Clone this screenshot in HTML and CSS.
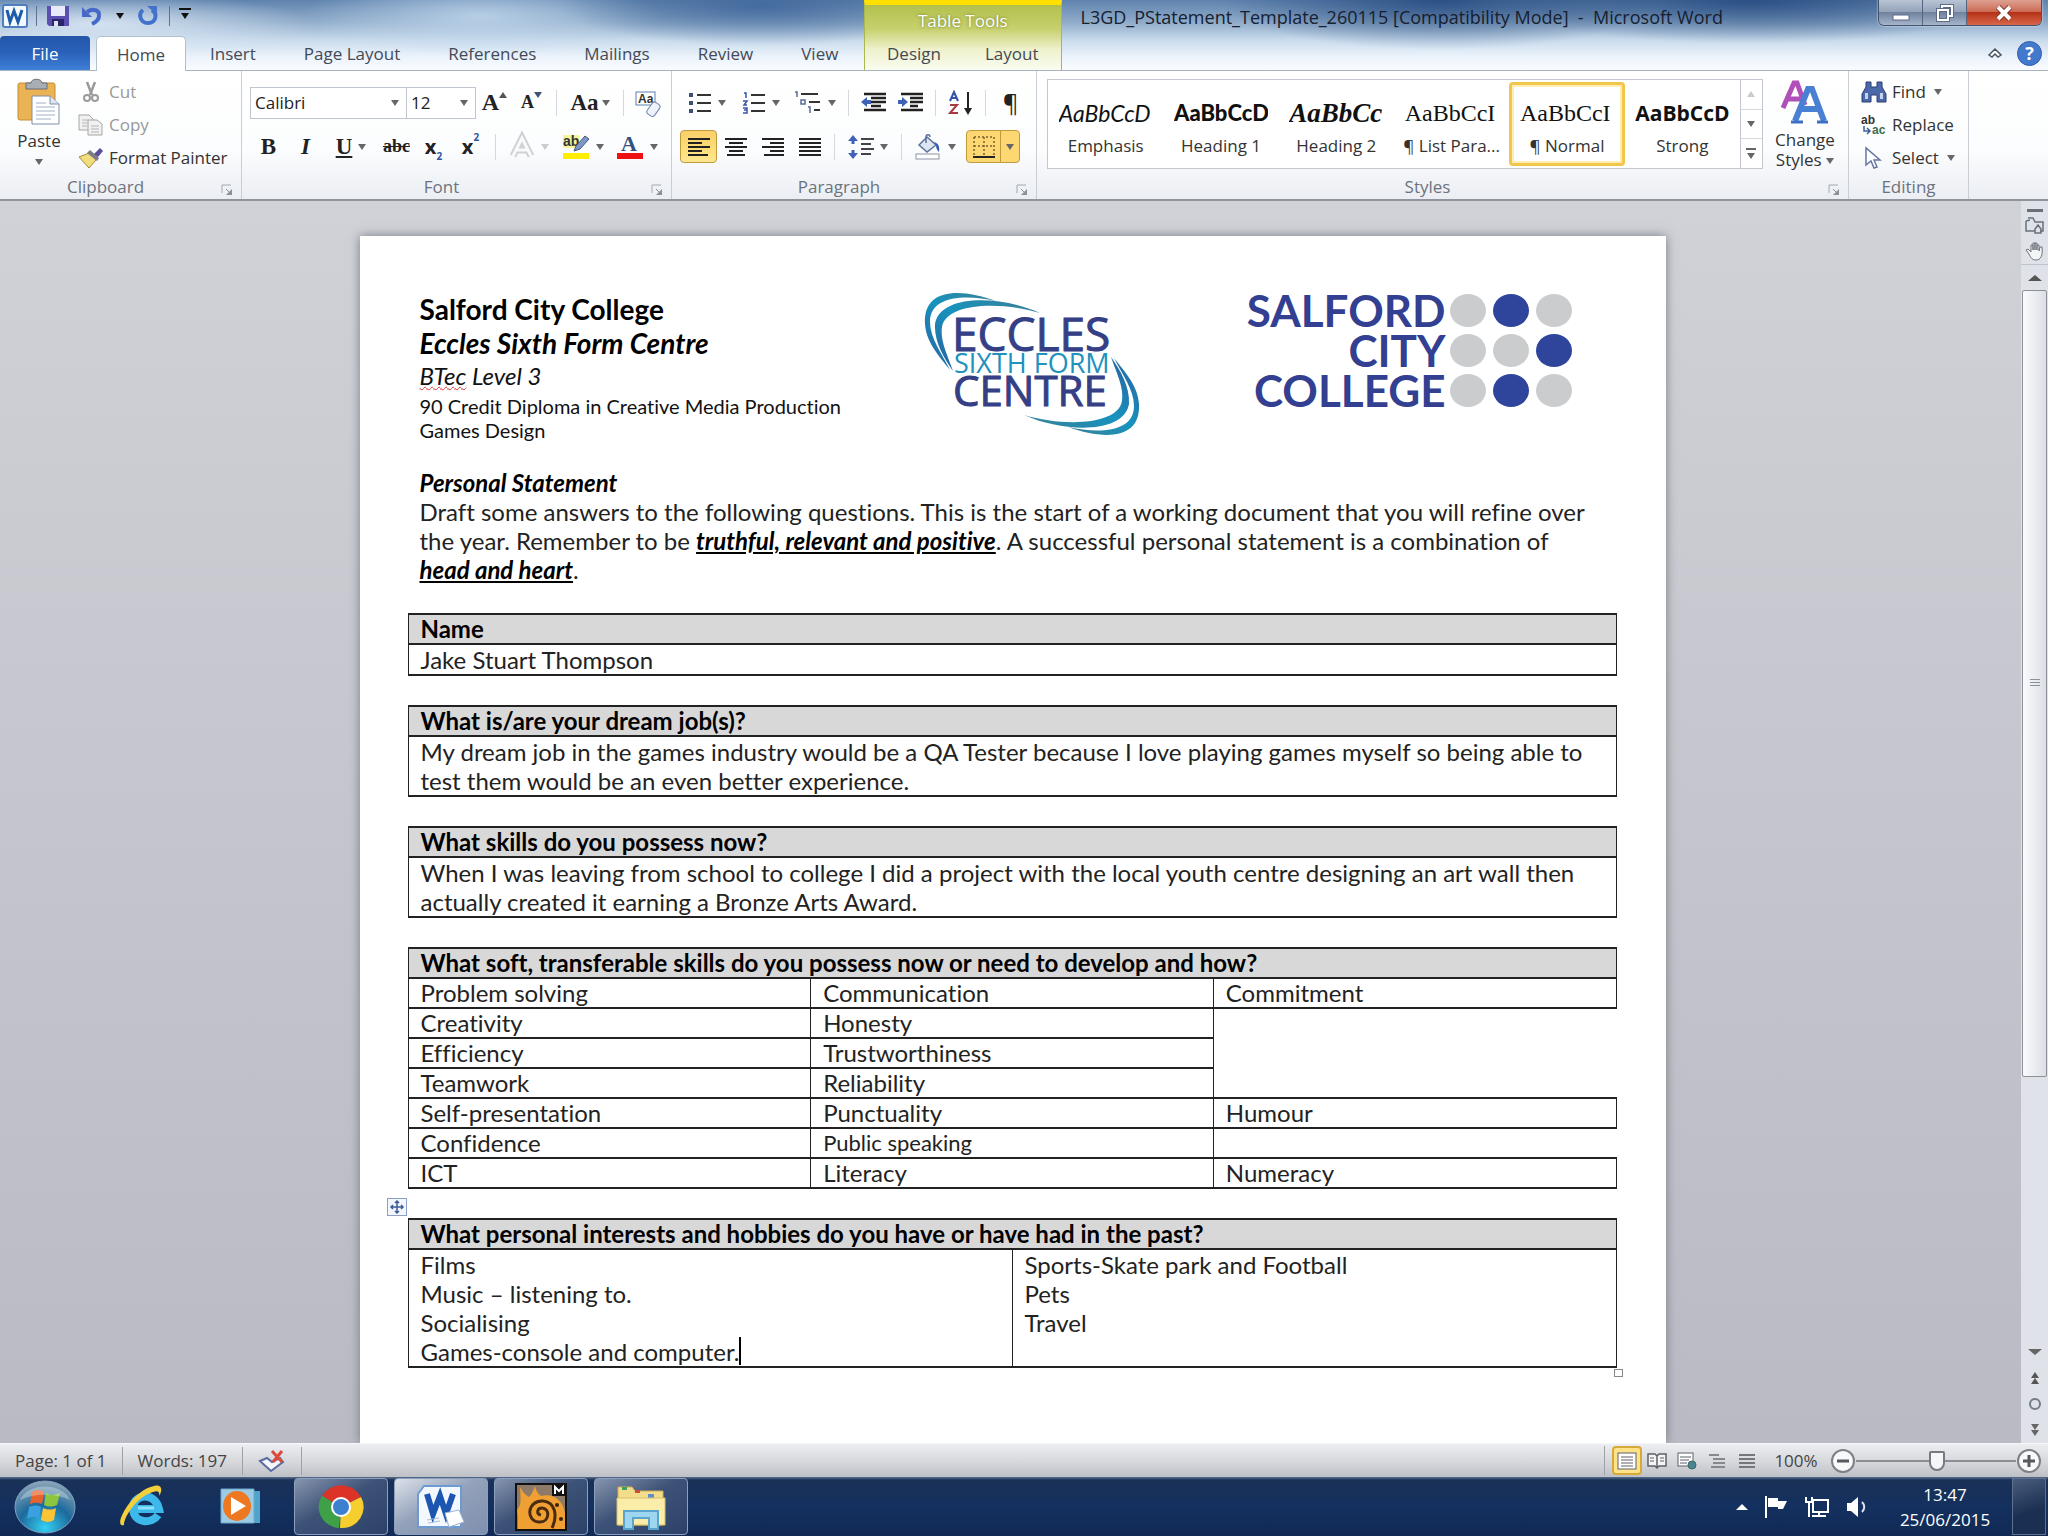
FILE: index.html
```html
<!DOCTYPE html>
<html lang="en">
<head>
  <meta charset="UTF-8">
  <title>L3GD_PStatement_Template_260115 [Compatibility Mode] - Microsoft Word</title>
  <meta name="viewport" content="width=device-width, initial-scale=1.0">
  <link rel="stylesheet" href="styles.css">
</head>
<body>
  <header class="titlebar">
    <div class="titlebar-left">
      <div class="quick-access">
        <svg class="app-icon" width="26" height="24" viewBox="0 0 26 24"><rect x="1" y="1" width="24" height="22" rx="2" fill="#f4f9ff" stroke="#4d7fc0" stroke-width="2"/><path d="M5 6l3 12 4-11 4 11 4-12" fill="none" stroke="#1d5cab" stroke-width="3"/></svg>
        <span class="qa-sep"></span>
        <button class="qa-btn" aria-label="Save"><svg width="24" height="22" viewBox="0 0 24 22"><path d="M1 1h22v20H3l-2-2z" fill="#5b4fb0"/><path d="M5 1h14v10H5z" fill="#e8ecfa"/><path d="M6 14h12v7H6z" fill="#2c2468"/><path d="M8 16h4v5H8z" fill="#dfe3f5"/></svg></button>
        <button class="qa-btn" aria-label="Undo"><svg width="22" height="22" viewBox="0 0 22 22"><path d="M6 7c6-4 13-2 12 4 0 4-3 6-7 8" fill="none" stroke="#4668c8" stroke-width="4"/><path d="M1 2v10h10z" fill="#4668c8"/></svg></button>
        <button class="qa-btn qa-small" aria-label="Undo list"><i class="arrow dark"></i></button>
        <button class="qa-btn" aria-label="Repeat"><svg width="22" height="22" viewBox="0 0 22 22"><path d="M6 5c-5 4-3 13 5 13s10-9 4-13" fill="none" stroke="#4272cc" stroke-width="4"/><path d="M10 1h10v9z" fill="#4272cc"/></svg></button>
        <span class="qa-sep"></span>
        <button class="qa-btn qa-small qa-custom" aria-label="Customize Quick Access Toolbar"><i class="arrow dark"></i></button>
      </div>
      <nav class="tabs">
        <button class="tab file">File</button>
        <button class="tab active">Home</button>
        <button class="tab">Insert</button>
        <button class="tab">Page Layout</button>
        <button class="tab">References</button>
        <button class="tab">Mailings</button>
        <button class="tab">Review</button>
        <button class="tab">View</button>
      </nav>
    </div>
    <div class="context-tools">
      <div class="context-title">Table Tools</div>
      <nav class="tabs">
        <button class="tab">Design</button>
        <button class="tab">Layout</button>
      </nav>
    </div>
    <div class="titlebar-right">
      <div class="title-row">
        <h1 class="doc-title">L3GD_PStatement_Template_260115 [Compatibility Mode] &nbsp;- &nbsp;Microsoft Word</h1>
        <div class="window-buttons">
          <button aria-label="Minimize"><svg width="18" height="20" viewBox="0 0 18 20"><rect x="1" y="12" width="16" height="5" fill="#fff" stroke="#5d6b85"/></svg></button>
          <button aria-label="Restore"><svg width="18" height="18" viewBox="0 0 18 18"><path d="M6 4V2h10v10h-3M2 6h10v10H2z" fill="none" stroke="#5d6b85" stroke-width="4"/><path d="M6 4V2h10v10h-3M2 6h10v10H2z" fill="none" stroke="#fff" stroke-width="2"/></svg></button>
          <button class="close" aria-label="Close"><svg width="18" height="16" viewBox="0 0 18 16"><path d="M3 2l12 12M15 2L3 14" stroke="#7c3328" stroke-width="6"/><path d="M3 2l12 12M15 2L3 14" stroke="#fff" stroke-width="4"/></svg></button>
        </div>
      </div>
      <div class="help-row">
        <button class="plain" aria-label="Minimize the Ribbon"><svg width="16" height="12" viewBox="0 0 16 12"><path d="M2 8l6-6 6 6-3 2-3-3-3 3z" fill="#fff" stroke="#4b5563" stroke-width="1.5"/></svg></button>
        <button class="help" aria-label="Help">?</button>
      </div>
    </div>
  </header>

  <section class="ribbon">
    <div class="group clipboard">
      <div class="group-body">
        <button class="big-btn">
          <svg width="44" height="46" viewBox="0 0 44 46"><rect x="1" y="4" width="37" height="37" rx="2" fill="#eab454" stroke="#c58d33"/><path d="M9 4h5c0-5 11-5 11 0h5v6H9z" fill="#a9adb5" stroke="#6a6d74"/><path d="M15 17h18l9 8v20H15z" fill="#fff" stroke="#7f8ea5"/><path d="M33 17v8h9" fill="#dde6f2" stroke="#7f8ea5"/><path d="M19 24h10M19 28h19M19 32h19M19 36h19M19 40h15" stroke="#9fb0c8"/></svg>
          <span>Paste</span>
          <i class="arrow"></i>
        </button>
        <div class="list-btns">
          <button class="row-btn" disabled><svg width="26" height="22" viewBox="0 0 26 22"><path d="M9 1l5 13M17 1l-5 13" stroke="#9a9a9a" stroke-width="2.5"/><circle cx="9" cy="17" r="3" fill="none" stroke="#9a9a9a" stroke-width="2"/><circle cx="17" cy="17" r="3" fill="none" stroke="#9a9a9a" stroke-width="2"/></svg>Cut</button>
          <button class="row-btn" disabled><svg width="26" height="22" viewBox="0 0 26 22"><path d="M1 1h10l4 4v11H1z" fill="#f1f1f1" stroke="#a5a5a5"/><path d="M10 6h9l5 4v11H10z" fill="#f1f1f1" stroke="#a5a5a5"/><path d="M4 6h6M4 9h5M4 12h5M13 12h8M13 15h8M13 18h8" stroke="#b5b5b5"/></svg>Copy</button>
          <button class="row-btn"><svg width="26" height="22" viewBox="0 0 26 22"><path d="M1 10l10-4 7 7-7 8z" fill="#f1dd7c" stroke="#a08c3a"/><path d="M9 6l10 8 2-3-9-8z" fill="#7c7c86"/><path d="M16 7l6-6 3 3-5 6z" fill="#5c4d9a"/></svg>Format Painter</button>
        </div>
      </div>
      <div class="group-label"><span>Clipboard</span><button class="launcher" aria-label="Clipboard options"><svg width="12" height="11" viewBox="0 0 12 11"><path d="M1 9V1h9" fill="none" stroke="#a3a8b1"/><path d="M5 5l4 4" stroke="#8b909a"/><path d="M11 5v6H5z" fill="#8b909a"/></svg></button></div>
    </div>

    <div class="group font">
      <div class="group-body rows">
        <div class="tool-row">
          <select class="combo font-name" aria-label="Font"><option>Calibri</option></select>
          <select class="combo font-size" aria-label="Font size"><option>12</option></select>
          <button class="tool serif grow" aria-label="Grow font">A<i class="arrow up"></i></button>
          <button class="tool serif shrink" aria-label="Shrink font">A<i class="arrow"></i></button>
          <span class="sep"></span>
          <button class="tool wide serif case" aria-label="Change case">Aa<i class="arrow"></i></button>
          <span class="sep"></span>
          <button class="tool" aria-label="Clear formatting"><svg width="28" height="26" viewBox="0 0 28 26"><rect x="1" y="2" width="19" height="13" fill="#fff" stroke="#5f7fae"/><text x="3" y="13" class="icon-text">Aa</text><rect x="14" y="12" width="9" height="14" rx="3" transform="rotate(35 18 19)" fill="#eef3fb" stroke="#6f84a8"/></svg></button>
        </div>
        <div class="tool-row">
          <button class="tool serif" aria-label="Bold"><b>B</b></button>
          <button class="tool serif" aria-label="Italic"><em>I</em></button>
          <button class="tool wide serif" aria-label="Underline"><u>U</u><i class="arrow"></i></button>
          <button class="tool serif strike" aria-label="Strikethrough"><s>abc</s></button>
          <button class="tool script" aria-label="Subscript">x<sub>2</sub></button>
          <button class="tool script" aria-label="Superscript">x<sup>2</sup></button>
          <span class="sep"></span>
          <button class="tool wide" aria-label="Text effects" disabled><svg width="26" height="26" viewBox="0 0 26 26"><path d="M4 22L13 4l9 18M8 16h10" fill="none" stroke="#cfd1d6" stroke-width="7"/><path d="M4 22L13 4l9 18M8 16h10" fill="none" stroke="#fafafa" stroke-width="3"/></svg><i class="arrow pale"></i></button>
          <button class="tool wide" aria-label="Highlight colour"><svg width="28" height="26" viewBox="0 0 28 26"><rect x="1" y="1" width="16" height="13" fill="#f6f59a"/><text x="1" y="12" class="icon-text big">ab</text><path d="M12 17l2-5 9-10 4 3-9 10z" fill="#7e97c4" stroke="#46597e"/><rect x="1" y="19" width="26" height="6" fill="#ffee00"/></svg><i class="arrow"></i></button>
          <button class="tool wide" aria-label="Font colour"><svg width="28" height="26" viewBox="0 0 28 26"><text x="5" y="17" class="icon-text colour">A</text><rect x="1" y="19" width="26" height="6" fill="#ee1111"/></svg><i class="arrow"></i></button>
        </div>
      </div>
      <div class="group-label"><span>Font</span><button class="launcher" aria-label="Font options"><svg width="12" height="11" viewBox="0 0 12 11"><path d="M1 9V1h9" fill="none" stroke="#a3a8b1"/><path d="M5 5l4 4" stroke="#8b909a"/><path d="M11 5v6H5z" fill="#8b909a"/></svg></button></div>
    </div>

    <div class="group paragraph">
      <div class="group-body rows">
        <div class="tool-row">
          <button class="tool wide" aria-label="Bullets"><svg width="24" height="22" viewBox="0 0 24 22"><path d="M1 3h4M1 11h4M1 19h4" stroke="#3d4f74" stroke-width="4"/><path d="M9 3h14M9 11h14M9 19h14" stroke="#333" stroke-width="2"/></svg><i class="arrow"></i></button>
          <button class="tool wide" aria-label="Numbering"><svg width="24" height="22" viewBox="0 0 24 22"><path d="M2 1h2v5M1 9h4l-3 4h3M1 16h4v5H1M2 18h3" fill="none" stroke="#3a55a8" stroke-width="1.5"/><path d="M9 3h14M9 11h14M9 19h14" stroke="#333" stroke-width="2"/></svg><i class="arrow"></i></button>
          <button class="tool wide" aria-label="Multilevel list"><svg width="28" height="24" viewBox="0 0 28 24"><path d="M1 1h2v5M7 9h4v4H7zM14 16h2v6" fill="none" stroke="#5a6c96" stroke-width="1.5"/><path d="M7 3h17M15 11h11M20 19h6" stroke="#333" stroke-width="2"/></svg><i class="arrow"></i></button>
          <span class="sep"></span>
          <button class="tool" aria-label="Decrease indent"><svg width="26" height="22" viewBox="0 0 26 22"><path d="M3 2h22M10 6h15M10 10h15M10 14h10M3 18h22" stroke="#222" stroke-width="2.5"/><path d="M0 10l6-5v3h4v4H6v3z" fill="#3d62b8"/></svg></button>
          <button class="tool" aria-label="Increase indent"><svg width="26" height="22" viewBox="0 0 26 22"><path d="M3 2h22M12 6h13M12 10h13M12 14h8M3 18h22" stroke="#222" stroke-width="2.5"/><path d="M10 10L4 5v3H0v4h4v3z" fill="#3d62b8"/></svg></button>
          <span class="sep"></span>
          <button class="tool" aria-label="Sort"><svg width="26" height="24" viewBox="0 0 26 24"><path d="M2 10l4-9 4 9M3 7h6" fill="none" stroke="#3452a8" stroke-width="2"/><path d="M2 14h7l-7 8h8" fill="none" stroke="#a83a44" stroke-width="2"/><path d="M20 1v18" stroke="#222" stroke-width="2"/><path d="M16 17h8l-4 7z" fill="#222"/></svg></button>
          <span class="sep"></span>
          <button class="tool pilcrow" aria-label="Show marks">¶</button>
        </div>
        <div class="tool-row">
          <button class="tool on" aria-label="Align left"><svg width="24" height="20" viewBox="0 0 24 20"><path d="M1 2h22M1 6h14M1 10h22M1 14h14M1 18h20" stroke="#222" stroke-width="2"/></svg></button>
          <button class="tool" aria-label="Center"><svg width="24" height="20" viewBox="0 0 24 20"><path d="M1 2h22M5 6h14M1 10h22M5 14h14M3 18h18" stroke="#222" stroke-width="2"/></svg></button>
          <button class="tool" aria-label="Align right"><svg width="24" height="20" viewBox="0 0 24 20"><path d="M1 2h22M9 6h14M1 10h22M9 14h14M3 18h20" stroke="#222" stroke-width="2"/></svg></button>
          <button class="tool" aria-label="Justify"><svg width="24" height="20" viewBox="0 0 24 20"><path d="M1 2h22M1 6h22M1 10h22M1 14h22M1 18h22" stroke="#222" stroke-width="2"/></svg></button>
          <span class="sep"></span>
          <button class="tool wide" aria-label="Line spacing"><svg width="26" height="26" viewBox="0 0 26 26"><path d="M5 4v6M5 16v6" stroke="#3d62b8" stroke-width="3"/><path d="M0 7l5-6 5 6zM0 19l5 6 5-6z" fill="#3d62b8"/><path d="M13 5h13M13 10h10M13 15h13M13 20h10" stroke="#444" stroke-width="2"/></svg><i class="arrow"></i></button>
          <span class="sep"></span>
          <button class="tool wide" aria-label="Shading"><svg width="28" height="26" viewBox="0 0 28 26"><path d="M5 11l8-8 9 8-9 7z" fill="#dce6f4" stroke="#5d7298" stroke-width="1.5"/><path d="M12 9V3c0-3 4-3 4 0" fill="none" stroke="#5d7298" stroke-width="1.5"/><path d="M20 8c4 1 6 4 5 10-2-2-3-4-3-7z" fill="#2f5cb0"/><rect x="2" y="20" width="23" height="5" fill="#fff" stroke="#8b94a5"/></svg><i class="arrow"></i></button>
          <button class="tool wide on split" aria-label="Borders"><svg width="24" height="24" viewBox="0 0 24 24"><path d="M2 2h20v18M2 2v18M12 2v18M2 11h20" fill="none" stroke="#7a6230" stroke-width="1.5" stroke-dasharray="2 2"/><path d="M1 22h22" stroke="#222" stroke-width="2"/></svg><i class="arrow"></i></button>
        </div>
      </div>
      <div class="group-label"><span>Paragraph</span><button class="launcher" aria-label="Paragraph options"><svg width="12" height="11" viewBox="0 0 12 11"><path d="M1 9V1h9" fill="none" stroke="#a3a8b1"/><path d="M5 5l4 4" stroke="#8b909a"/><path d="M11 5v6H5z" fill="#8b909a"/></svg></button></div>
    </div>

    <div class="group styles">
      <div class="group-body">
        <div class="gallery">
          <button class="style"><span class="sample emphasis">AaBbCcD</span><span>Emphasis</span></button>
          <button class="style"><span class="sample heading1">AaBbCcD</span><span>Heading 1</span></button>
          <button class="style"><span class="sample heading2">AaBbCc</span><span>Heading 2</span></button>
          <button class="style"><span class="sample">AaBbCcI</span><span>¶ List Para...</span></button>
          <button class="style selected"><span class="sample">AaBbCcI</span><span>¶ Normal</span></button>
          <button class="style"><span class="sample strong">AaBbCcD</span><span>Strong</span></button>
          <div class="gallery-scroll">
            <button aria-label="Previous styles" disabled><i class="arrow up pale"></i></button>
            <button aria-label="Next styles"><i class="arrow"></i></button>
            <button class="more" aria-label="More styles"><i class="arrow"></i></button>
          </div>
        </div>
        <button class="big-btn change">
          <svg width="48" height="44" viewBox="0 0 48 44"><path d="M2 28L13 3h3l8 22M6 19h14" fill="none" stroke="#b04fb8" stroke-width="5"/><path d="M14 41L27 9h4l12 32M19 29h19" fill="none" stroke="#4a80d4" stroke-width="6"/><path d="M10 42h12M36 42h11" stroke="#3d6fc2" stroke-width="3"/></svg>
          <span>Change<br>Styles <i class="arrow"></i></span>
        </button>
      </div>
      <div class="group-label"><span>Styles</span><button class="launcher" aria-label="Styles options"><svg width="12" height="11" viewBox="0 0 12 11"><path d="M1 9V1h9" fill="none" stroke="#a3a8b1"/><path d="M5 5l4 4" stroke="#8b909a"/><path d="M11 5v6H5z" fill="#8b909a"/></svg></button></div>
    </div>

    <div class="group editing">
      <div class="group-body">
        <div class="list-btns">
          <button class="row-btn"><svg width="26" height="22" viewBox="0 0 26 22"><path d="M5 1h5v5h6V1h5v5l4 7v8h-9v-7h-6v7H1v-8l4-7z" fill="#4b68a8" stroke="#2b3f70"/><path d="M4 12h3v6H4zM19 12h3v6h-3z" fill="#c4d2ee"/></svg>Find <i class="arrow"></i></button>
          <button class="row-btn"><svg width="26" height="22" viewBox="0 0 26 22"><text x="0" y="10" class="icon-text">ab</text><text x="11" y="20" class="icon-text green">ac</text><path d="M3 12v5h5M6 14l3 3-3 3" fill="none" stroke="#3d5f9f" stroke-width="1.5"/></svg>Replace</button>
          <button class="row-btn"><svg width="26" height="22" viewBox="0 0 26 22"><path d="M5 1v17l5-4 3 7 3-1-3-7h6z" fill="#fff" stroke="#6577a0" stroke-width="1.5"/></svg>Select <i class="arrow"></i></button>
        </div>
      </div>
      <div class="group-label"><span>Editing</span></div>
    </div>
  </section>

  <main class="workspace">
    <div class="canvas">
      <article class="page">
        <div class="letterhead">
          <div class="heading">
            <h2>Salford City College</h2>
            <h2><em>Eccles Sixth Form Centre</em></h2>
            <p class="level"><em><span class="misspelt">BTec</span> Level 3</em></p>
            <p class="course">90 Credit Diploma in Creative Media Production<br>Games Design</p>
          </div>
          <svg class="eccles-logo" width="220" height="152" viewBox="0 2 220 152" role="img" aria-label="Eccles Sixth Form Centre">
            <defs>
              <linearGradient id="swoosh" x1="0" y1="1" x2="1" y2="0">
                <stop offset="0" stop-color="#2a5f9e"/>
                <stop offset="0.5" stop-color="#1793bd"/>
                <stop offset="1" stop-color="#3a7f96"/>
              </linearGradient>
              <g id="arcs">
                <path d="M76 13C40 0 3 0 5 36c1 18 14 32 25 46C22 66 10 50 10 34 10 8 44 6 76 13z" fill="url(#swoosh)"/>
                <path d="M120 25C80 7 20 6 15 36c-1 18 9 34 18 47-6-17-13-31-11-44 4-24 58-26 98-14z" fill="url(#swoosh)"/>
              </g>
            </defs>
            <use href="#arcs"/>
            <use href="#arcs" transform="rotate(180 112 76)"/>
            <text x="32" y="63" class="logo-eccles">ECCLES</text>
            <text x="34" y="85" class="logo-sixth">SIXTH FORM</text>
            <text x="33" y="118" class="logo-centre">CENTRE</text>
          </svg>
          <div class="salford-logo">
            <div class="salford-name">SALFORD<br>CITY<br>COLLEGE</div>
            <div class="dots">
              <i></i><i class="blue"></i><i></i>
              <i></i><i></i><i class="blue"></i>
              <i></i><i class="blue"></i><i></i>
            </div>
          </div>
        </div>

        <div class="intro">
          <h3>Personal Statement</h3>
          <p>Draft some answers to the following questions. This is the start of a working document that you will refine over the year. Remember to be <strong>truthful, relevant and positive</strong>. A successful personal statement is a combination of <strong>head and heart</strong>.</p>
        </div>

        <table>
          <tr><th>Name</th></tr>
          <tr><td>Jake Stuart Thompson</td></tr>
        </table>

        <table>
          <tr><th>What is/are your dream job(s)?</th></tr>
          <tr><td>My dream job in the games industry would be a QA Tester because I love playing games myself so being able to test them would be an even better experience.</td></tr>
        </table>

        <table>
          <tr><th>What skills do you possess now?</th></tr>
          <tr><td>When I was leaving from school to college I did a project with the local youth centre designing an art wall then actually created it earning a Bronze Arts Award.</td></tr>
        </table>

        <table class="skills">
          <tr><th colspan="3">What soft, transferable skills do you possess now or need to develop and how?</th></tr>
          <tr><td>Problem solving</td><td>Communication</td><td>Commitment</td></tr>
          <tr><td>Creativity</td><td>Honesty</td><td class="open" rowspan="3"></td></tr>
          <tr><td>Efficiency</td><td>Trustworthiness</td></tr>
          <tr><td>Teamwork</td><td>Reliability</td></tr>
          <tr><td>Self-presentation</td><td>Punctuality</td><td>Humour</td></tr>
          <tr><td>Confidence</td><td class="small">Public speaking</td><td class="open"></td></tr>
          <tr><td>ICT</td><td>Literacy</td><td>Numeracy</td></tr>
        </table>

        <div class="current-table">
          <svg class="move-handle" width="20" height="18" viewBox="0 0 20 18"><rect x="0.5" y="0.5" width="19" height="17" fill="#f3f7fd" stroke="#8aa0c4"/><path d="M10 3v12M4 9h12M8 5l2-2 2 2M8 13l2 2 2-2M6 7L4 9l2 2M14 7l2 2-2 2" fill="none" stroke="#3c5c98" stroke-width="1.5"/></svg>
          <table>
            <tr><th colspan="2">What personal interests and hobbies do you have or have had in the past?</th></tr>
            <tr>
              <td>Films<br>Music – listening to.<br>Socialising<br>Games-console and computer.<span class="caret"></span></td>
              <td>Sports-Skate park and Football<br>Pets<br>Travel</td>
            </tr>
          </table>
          <span class="resize-handle"></span>
        </div>
      </article>
    </div>

    <aside class="scrollbar">
      <span class="split-bar"></span>
      <button aria-label="View ruler"><svg width="20" height="18" viewBox="0 0 20 18"><path d="M3 2h5l2 4h8v9h-3M1 5v10h9M1 5l4-1M10 13l3-4 3 4v4h-6z" fill="none" stroke="#6b7079" stroke-width="1.5"/></svg></button>
      <button aria-label="Pan"><svg width="20" height="20" viewBox="0 0 20 20"><path d="M4 13L1 9l2-1 3 3V4h2v5V2h2v7V2h2v7V4h2v6l1-4h2c1 8-1 13-6 13-4 0-5-2-7-6z" fill="#f4f5f7" stroke="#6b7079"/></svg></button>
      <button class="line-up" aria-label="Line up"><i class="arrow up big"></i></button>
      <div class="track"><div class="thumb"><i></i></div></div>
      <button aria-label="Line down"><i class="arrow big"></i></button>
      <button class="browse" aria-label="Previous page"><i class="arrow up"></i><i class="arrow up"></i></button>
      <button class="browse" aria-label="Select browse object"><i class="ring"></i></button>
      <button class="browse" aria-label="Next page"><i class="arrow"></i><i class="arrow"></i></button>
    </aside>
  </main>

  <footer class="statusbar">
    <button class="status-item">Page: 1 of 1</button>
    <button class="status-item">Words: 197</button>
    <button class="status-item" aria-label="Proofing errors"><svg width="28" height="24" viewBox="0 0 28 24"><path d="M2 12l7-3 5 4 8-4 3 4-12 9z" fill="#f4f6fb" stroke="#5a6da0" stroke-width="2"/><path d="M14 2l10 11M24 2L15 13" stroke="#dc4a3a" stroke-width="3"/></svg></button>
    <span class="status-space"></span>
    <div class="views">
      <button class="on" aria-label="Print Layout"><svg width="20" height="18" viewBox="0 0 20 18"><rect x="1" y="1" width="18" height="16" fill="#fff" stroke="#5d6067"/><path d="M4 5h12M4 8h12M4 11h12M4 14h12" stroke="#5d6067"/></svg></button>
      <button aria-label="Full Screen Reading"><svg width="20" height="18" viewBox="0 0 20 18"><path d="M1 2h7l2 2 2-2h7v12h-7l-2 2-2-2H1zM10 4v13" fill="#f5f5f5" stroke="#5d6067" stroke-width="1.5"/><path d="M3 6h4M3 9h4M13 6h4M13 9h4" stroke="#5d6067"/></svg></button>
      <button aria-label="Web Layout"><svg width="20" height="18" viewBox="0 0 20 18"><rect x="1" y="1" width="15" height="13" fill="#fff" stroke="#5d6067"/><path d="M3 5h11M3 8h9M3 11h7" stroke="#5d6067"/><circle cx="15" cy="13" r="4" fill="#4a8296" stroke="#3d6c58"/></svg></button>
      <button aria-label="Outline"><svg width="20" height="18" viewBox="0 0 20 18"><path d="M2 3h10M6 7h12M6 11h12M4 15h14" stroke="#85888f" stroke-width="2"/></svg></button>
      <button aria-label="Draft"><svg width="20" height="18" viewBox="0 0 20 18"><path d="M2 3h16M2 7h16M2 11h16M2 15h16" stroke="#74777e" stroke-width="2"/></svg></button>
    </div>
    <button class="zoom-level">100%</button>
    <button class="zoom-btn" aria-label="Zoom out"><svg width="26" height="26" viewBox="0 0 26 26"><circle cx="13" cy="13" r="11" fill="#f8f9fa" stroke="#7c8087" stroke-width="2"/><path d="M7 13h12" stroke="#55585e" stroke-width="3"/></svg></button>
    <input class="zoom-slider" type="range" min="0" max="100" value="51" aria-label="Zoom">
    <button class="zoom-btn" aria-label="Zoom in"><svg width="26" height="26" viewBox="0 0 26 26"><circle cx="13" cy="13" r="11" fill="#f8f9fa" stroke="#7c8087" stroke-width="2"/><path d="M7 13h12M13 7v12" stroke="#55585e" stroke-width="3"/></svg></button>
  </footer>

  <nav class="taskbar">
    <button class="start" aria-label="Start">
      <svg width="62" height="54" viewBox="0 0 62 54">
        <defs>
          <radialGradient id="orb" cx="0.5" cy="0.9" r="0.9"><stop offset="0" stop-color="#35d0f5"/><stop offset="0.5" stop-color="#1c6a9c"/><stop offset="1" stop-color="#8fa6b8"/></radialGradient>
        </defs>
        <ellipse cx="31" cy="27" rx="30" ry="26" fill="url(#orb)" stroke="#7fa0bd"/>
        <path d="M18 12c5-3 9-2 12 0l-2 12c-4-2-8-2-12 0z" fill="#e8622c"/>
        <path d="M32 13c5 3 9 2 14 0l-3 12c-5 2-9 2-13 0z" fill="#8cc63f"/>
        <path d="M15 27c5-2 9-2 12 0l-2 12c-4-3-8-2-12 0z" fill="#3aa0e0"/>
        <path d="M29 28c5 2 9 2 13 0l-2 12c-5 3-9 2-13 0z" fill="#fbc336"/>
        <path d="M6 20C14 2 48 2 56 20c-14-7-36-7-50 0z" fill="#fff" opacity="0.3"/>
      </svg>
    </button>
    <button class="task" aria-label="Internet Explorer">
      <svg width="50" height="48" viewBox="0 0 50 48"><path d="M42 32c-6 9-24 9-25-6s22-18 26 0H18" fill="none" stroke="#3db8ea" stroke-width="8"/><path d="M22 25h16" stroke="#8fe0fa" stroke-width="3"/><path d="M8 42C-4 46 14 8 38 3c8-2 9 4 5 10 1-4-1-6-6-4C22 13 8 33 8 42z" fill="#f4cf3c"/></svg>
    </button>
    <button class="task" aria-label="Media Player">
      <svg width="44" height="40" viewBox="0 0 44 40"><path d="M8 4h33v32H8z" fill="#4fa4cc"/><path d="M2 2h33v34H2z" fill="#9ecbe4" stroke="#6aa9cc"/><ellipse cx="18" cy="19" rx="14" ry="15" fill="#ee7722"/><path d="M12 10l15 9-15 9z" fill="#fff"/></svg>
    </button>
    <button class="task open" aria-label="Chrome">
      <svg width="46" height="44" viewBox="0 0 46 44"><path d="M23 22L4 11a22 21 0 0 1 39 1z" fill="#db3327"/><path d="M23 22L43 12a22 21 0 0 1-21 31z" fill="#f6cf2f"/><path d="M23 22l-2 21A22 21 0 0 1 4 11z" fill="#3fa147"/><circle cx="23" cy="22" r="10" fill="#fff"/><circle cx="23" cy="22" r="8" fill="#3d80d0"/></svg>
    </button>
    <button class="task open current" aria-label="Word">
      <svg width="48" height="44" viewBox="0 0 48 44"><path d="M7 1h37v41H1V9z" fill="#f3f8ff" stroke="#6d9ad0" stroke-width="2"/><path d="M10 9l6 20 7-18 6 18 7-20" fill="none" stroke="#1d56b0" stroke-width="6"/><path d="M28 28l14-3 5 12-15 5z" fill="#fff" stroke="#9db4d3"/><path d="M10 35l12-2M11 38l12-2" stroke="#a8bbd6"/></svg>
    </button>
    <button class="task open" aria-label="Game Maker">
      <svg width="52" height="48" viewBox="0 0 52 48"><rect x="1" y="1" width="50" height="46" fill="#8d7a68" stroke="#111" stroke-width="2"/><path d="M2 27c4-5 4-8 3-23 3 5 5 8 9 10 3-3 4-6 6-11 1 5 3 8 6 10 13-3 22 5 24 17v16H3V34z" fill="#f0a033"/><path d="M26 32c-5-1-4-7 1-7 8 0 8 14-2 14-15 0-13-22 3-21 12 1 15 14 9 27" fill="none" stroke="#4a2c10" stroke-width="3"/><circle cx="42" cy="22" r="2" fill="#3b220c"/><circle cx="46" cy="36" r="2" fill="#3b220c"/><rect x="37" y="2" width="13" height="11" fill="#111"/><path d="M40 11V4l4 4 4-4v7" fill="none" stroke="#fff" stroke-width="2"/></svg>
    </button>
    <button class="task open" aria-label="Explorer">
      <svg width="54" height="46" viewBox="0 0 54 46"><path d="M4 3h14l3 4h28v34H4z" fill="#f3dd8b" stroke="#cfae52"/><path d="M8 3h5v3H8z" fill="#3da35c"/><path d="M21 6h5v3h-5z" fill="#cc4d3e"/><path d="M34 10h6v4h-6z" fill="#5b8fd0"/><path d="M3 14h48v27H3z" fill="#faeca9" stroke="#d8bf68"/><path d="M10 45V27h34v18h-9V34H19v11z" fill="#9fd6ef" stroke="#5aa4ce" stroke-width="2"/></svg>
    </button>
    <span class="task-space"></span>
    <div class="tray">
      <button aria-label="Show hidden icons"><i class="arrow up light"></i></button>
      <button aria-label="Action Center"><svg width="24" height="24" viewBox="0 0 24 24"><path d="M2 1v22" stroke="#fff" stroke-width="2"/><path d="M4 3h10v3h9l-4 8h-5v-2H4z" fill="#fff"/></svg></button>
      <button aria-label="Network"><svg width="26" height="24" viewBox="0 0 26 24"><path d="M9 5h15v12H9zM8 21h14M15 17v4" fill="none" stroke="#fff" stroke-width="2"/><path d="M2 2v5h6V2M5 7v15" fill="none" stroke="#fff" stroke-width="2"/></svg></button>
      <button aria-label="Volume"><svg width="22" height="24" viewBox="0 0 22 24"><path d="M1 8h4l7-6v20l-7-6H1z" fill="#fff"/><path d="M16 7c3 3 3 7 0 10" fill="none" stroke="#dfe6f2" stroke-width="2"/></svg></button>
      <time class="clock">13:47<br>25/06/2015</time>
      <button class="show-desktop" aria-label="Show desktop"></button>
    </div>
  </nav>
</body>
</html>
```
FILE: styles.css
```css
* {
  box-sizing: border-box;
}

body {
  margin: 0;
  height: 100vh;
  display: flex;
  flex-direction: column;
  overflow: hidden;
  font-family: "Open Sans", "Noto Sans", sans-serif;
  font-size: 17px;
  color: #333;
}

button {
  font: inherit;
  color: inherit;
  padding: 0;
  border: 0;
  background: none;
  display: flex;
  align-items: center;
  justify-content: center;
  white-space: nowrap;
}

svg {
  flex: none;
  overflow: visible;
}

.arrow {
  display: inline-block;
  flex: none;
  border: 4px solid transparent;
  border-top: 6px solid #666;
  border-bottom: 0;
}

.arrow.up {
  border-top: 0;
  border-bottom: 6px solid #555;
}

.arrow.dark {
  border-top-color: #111;
}

.arrow.pale {
  border-top-color: #ccc;
}

.arrow.up.pale {
  border-bottom-color: #ccc;
}

.arrow.light {
  border-left-width: 6px;
  border-right-width: 6px;
  border-bottom-color: #fff;
}

.arrow.big {
  border-left-width: 7px;
  border-right-width: 7px;
}

/* title bar */

.titlebar {
  display: flex;
  flex: none;
  height: 71px;
  border-bottom: 1px solid #a9b3c2;
  background:
    radial-gradient(ellipse 220px 50px at 1440px 0, #1d4379cc, transparent),
    radial-gradient(ellipse 260px 44px at 1750px 0, #1b4279cc, transparent),
    radial-gradient(ellipse 200px 40px at 760px 6px, #3b6398cc, transparent),
    radial-gradient(ellipse 180px 40px at 480px 16px, #c3d9eecc, transparent),
    radial-gradient(ellipse 220px 30px at 100px 24px, #e3eefacc, transparent),
    linear-gradient(#5f83ae, #8fabc9 22px, #c9dbec 40px, #eaf2fb 56px, #fafcff);
}

.titlebar-left,
.titlebar-right {
  display: flex;
  flex-direction: column;
}

.titlebar-left {
  min-width: 864px;
}

.titlebar-right {
  flex: 1;
}

.quick-access {
  height: 36px;
  padding: 0 2px 4px;
  display: flex;
  align-items: center;
  gap: 8px;
}

.qa-sep {
  width: 1px;
  height: 20px;
  background: #5c7391;
}

.qa-btn {
  width: 26px;
}

.qa-small {
  width: 14px;
}

.qa-custom .arrow {
  position: relative;
}

.qa-custom .arrow::before {
  content: "";
  position: absolute;
  left: -6px;
  top: -11px;
  width: 12px;
  height: 2px;
  background: #111;
}

.tabs {
  display: flex;
  height: 34px;
}

.tab {
  padding: 0 24px;
  color: #444a55;
}

.context-tools .tab {
  padding: 0 22px;
}

.tab.file {
  width: 90px;
  margin-right: 6px;
  color: #fff;
  border-radius: 4px 4px 0 0;
  background: linear-gradient(#2456a8, #2a62ba 50%, #3f80d8);
}

.tab.active {
  height: 35px;
  width: 90px;
  background: #fff;
  border: 1px solid #b4bfcd;
  border-bottom: 0;
  border-radius: 5px 5px 0 0;
}

.context-tools {
  border-top: 5px solid #ffe000;
  border-left: 1px solid #a9b84e;
  border-right: 1px solid #a9b84e;
  background: linear-gradient(#b3c04c, #c7d06e 24px, #eef1cb 44px, #fafcf0);
}

.context-title {
  height: 31px;
  line-height: 31px;
  text-align: center;
  color: #fff;
  text-shadow: 0 0 3px #6c7620;
}

.title-row {
  display: flex;
  justify-content: space-between;
  height: 36px;
  padding: 0 6px 0 19px;
}

.doc-title {
  margin: 0;
  font-size: 18px;
  font-weight: normal;
  line-height: 34px;
  white-space: nowrap;
  color: #16202f;
}

.window-buttons {
  display: flex;
  height: 26px;
  border: 1px solid #44546e;
  border-top: 0;
  border-radius: 0 0 6px 6px;
  overflow: hidden;
  box-shadow: 0 0 2px #fff;
}

.window-buttons button {
  width: 44px;
  border-right: 1px solid #55657f;
  background: linear-gradient(#b9c4d4, #93a2b8 50%, #70829e 50%, #a5b4ca);
}

.window-buttons .close {
  width: 74px;
  border: 0;
  background: linear-gradient(#dda092, #cc6650 50%, #b53217 50%, #d9664a);
}

.help-row {
  height: 34px;
  display: flex;
  align-items: center;
  justify-content: flex-end;
  gap: 14px;
  padding-right: 6px;
}

.help {
  width: 25px;
  height: 25px;
  border-radius: 50%;
  color: #fff;
  font-size: 18px;
  font-weight: bold;
  background: #4379cc;
  border: 1px solid #2e5da8;
}

/* ribbon */

.ribbon {
  display: flex;
  flex: none;
  height: 130px;
  background: linear-gradient(#fff, #fcfdfe 60%, #ebeef3);
  border-bottom: 2px solid #8f949d;
}

.group {
  display: flex;
  flex-direction: column;
  border-right: 1px solid #c9cdd4;
}

.group.clipboard {
  width: 242px;
}

.group.font {
  width: 430px;
}

.group.paragraph {
  width: 365px;
}

.group.styles {
  width: 812px;
}

.group.editing {
  width: 120px;
}

.group-body {
  height: 104px;
  display: flex;
  padding-left: 8px;
}

.group-label {
  height: 22px;
  display: flex;
  align-items: center;
  color: #6d737d;
}

.group-label span {
  flex: 1;
  text-align: center;
}

.launcher {
  margin: 6px 8px 0 10px;
}

.big-btn {
  flex-direction: column;
  justify-content: flex-start;
  padding-top: 8px;
  width: 62px;
}

.big-btn span {
  line-height: 20px;
  margin: 6px 0 8px;
}

.list-btns {
  padding: 4px 0 0 8px;
}

.row-btn {
  height: 33px;
  gap: 5px;
}

.row-btn:disabled {
  color: #999;
}

.rows {
  flex-direction: column;
  gap: 11px;
  padding-top: 15px;
}

.tool-row {
  display: flex;
  align-items: center;
  height: 33px;
}

.combo {
  appearance: none;
  height: 32px;
  padding: 0 6px 0 4px;
  border: 1px solid #c0c5ce;
  border-radius: 0;
  background: #fff url("data:image/svg+xml,%3Csvg xmlns='http://www.w3.org/2000/svg' width='8' height='6'%3E%3Cpath d='M0 0h8L4 6z' fill='%23666'/%3E%3C/svg%3E") no-repeat right 7px center;
  font: inherit;
  color: #222;
}

.font-name {
  width: 157px;
}

.font-size {
  width: 69px;
  border-left: 0;
}

.tool {
  width: 37px;
  height: 33px;
  color: #222;
}

.tool.wide {
  width: 54px;
  gap: 6px;
}

.tool.on {
  border: 1px solid #c29a3e;
  border-radius: 4px;
  background: linear-gradient(#f9cf6a, #fddc75 50%, #fee691);
}

.tool.on.split {
  gap: 0;
  justify-content: space-between;
  margin-left: 4px;
  padding: 0 5px 0 5px;
  background: linear-gradient(#c29a3e, #c29a3e) no-repeat 33px 0 / 1px 100%, #fdd872;
}

.serif {
  font-family: "Liberation Serif", serif;
  font-size: 23px;
  font-weight: bold;
}

.grow {
  font-size: 24px;
}

.shrink {
  font-size: 18px;
}

.grow .arrow,
.shrink .arrow {
  align-self: flex-start;
  margin-top: 6px;
  border-top-color: #3f5374;
}

.tool.case {
  gap: 3px;
}

.strike {
  font-size: 18px;
}

.script {
  font-weight: bold;
  font-size: 20px;
}

.script sub,
.script sup {
  font-size: 10px;
  color: #2f55a0;
}

.script sub {
  align-self: flex-end;
}

.script sup {
  align-self: flex-start;
}

.pilcrow {
  font-size: 24px;
}

.icon-text {
  font: bold 12px "Liberation Sans", sans-serif;
  fill: #333;
}

.icon-text.big {
  font-size: 14px;
}

.icon-text.green {
  fill: #3c6c50;
}

.icon-text.colour {
  font: bold 22px "Liberation Serif", serif;
  fill: #33507f;
}

.sep {
  width: 1px;
  height: 26px;
  margin: 0 6px;
  background: #d5d8de;
}

.styles .group-body {
  padding: 8px 0 0 10px;
}

.gallery {
  display: flex;
  height: 90px;
  width: 716px;
  border: 1px solid #c3c8d0;
  background: #fff;
}

.style {
  flex: 1;
  flex-direction: column;
  gap: 5px;
  min-width: 0;
  margin: 2px 0;
  padding-top: 5px;
  border: 3px solid transparent;
}

.style.selected {
  border-color: #f2c64c;
  border-radius: 4px;
  box-shadow: inset 0 0 0 2px #fdeeb4;
}

.sample {
  width: 94px;
  height: 32px;
  line-height: 32px;
  overflow: hidden;
  text-align: left;
  color: #111;
  font-family: "Liberation Serif", serif;
  font-size: 24px;
}

.sample.emphasis {
  font-family: Lato, sans-serif;
  font-size: 23px;
  font-style: italic;
}

.sample.heading1 {
  font-family: Lato, sans-serif;
  font-size: 22px;
  font-weight: 900;
}

.sample.heading2 {
  font-size: 27px;
  font-weight: bold;
  font-style: italic;
}

.sample.strong {
  font-family: "Open Sans", sans-serif;
  font-size: 21px;
  font-weight: bold;
}

.gallery-scroll {
  width: 22px;
  display: flex;
  flex-direction: column;
  border-left: 1px solid #c3c8d0;
}

.gallery-scroll button {
  flex: 1;
  border-bottom: 1px solid #d5d8de;
}

.gallery-scroll .more {
  flex-direction: column;
  gap: 3px;
  border-bottom: 0;
}

.more::before {
  content: "";
  width: 10px;
  height: 2px;
  background: #666;
}

.change {
  width: 84px;
  padding-top: 1px;
}

.change .arrow {
  vertical-align: middle;
}

.editing .row-btn .arrow {
  margin-left: 3px;
}

.editing .list-btns {
  padding-left: 4px;
}

/* document area */

.workspace {
  flex: 1;
  min-height: 0;
  display: flex;
  background: linear-gradient(#d0d2d7, #c4c5cd 50%, #b9bac3);
}

.canvas {
  flex: 1;
  display: flex;
  justify-content: center;
  padding: 35px 0 0 4px;
  overflow: hidden;
}

.page {
  width: 1306px;
  flex: none;
  padding: 54px 49px 0 48px;
  background: #fff;
  box-shadow: 0 0 10px #777b84;
  font-family: Lato, "Noto Sans", sans-serif;
  font-size: 24px;
  font-variant-ligatures: none;
  line-height: 29px;
  color: #222;
}

.page p,
.page h2,
.page h3 {
  margin: 0;
  font-size: inherit;
}

.letterhead {
  display: flex;
  align-items: flex-start;
  padding-left: 12px;
  height: 178px;
}

.heading {
  width: 500px;
  color: #111;
}

.page .heading h2 {
  font-size: 28px;
  line-height: 34px;
  padding-top: 2px;
  margin-bottom: -2px;
  color: #000;
}

.page .level {
  line-height: 36px;
}

.page .course {
  font-size: 20px;
  line-height: 24px;
}

.misspelt {
  text-decoration: underline wavy #d33 1px;
}

.logo-eccles {
  font: 46px "Open Sans", sans-serif;
  fill: #353f85;
  stroke: #353f85;
}

.logo-sixth {
  font: 27px "Open Sans", sans-serif;
  fill: #2191bd;
}

.logo-centre {
  font: 42px "Open Sans", sans-serif;
  fill: #353f85;
  stroke: #353f85;
}

.salford-logo {
  display: flex;
  gap: 4px;
  margin-left: 104px;
}

.salford-name {
  width: 202px;
  text-align: right;
  font-size: 44px;
  font-weight: bold;
  line-height: 40px;
  color: #333f91;
}

.dots {
  display: grid;
  grid-template-columns: repeat(3, 36px);
  grid-auto-rows: 33px;
  gap: 7px;
  padding-top: 4px;
}

.dots i {
  border-radius: 50%;
  background: #cbcccd;
}

.dots .blue {
  background: #2f449b;
}

.intro {
  padding: 0 24px 0 12px;
  margin-bottom: 29px;
}

.page h3 {
  font-style: italic;
  color: #000;
}

.intro strong {
  font-style: italic;
  text-decoration: underline;
  color: #000;
}

.page table {
  width: 100%;
  table-layout: fixed;
  border-collapse: collapse;
  margin-bottom: 29px;
}

.page th,
.page td {
  border: 1px solid #222;
  border-width: 2px 1px;
  padding: 0 12px;
  line-height: 29px;
  text-align: left;
  vertical-align: top;
}

.page th {
  background: #d9d8d9;
  line-height: 28px;
  color: #000;
}

.page .skills td {
  line-height: 28px;
}

.page td.open {
  border-right-style: hidden;
}

.page td.small {
  font-size: 22px;
}

.current-table {
  position: relative;
}

.move-handle {
  position: absolute;
  left: -21px;
  top: -20px;
}

.resize-handle {
  position: absolute;
  right: -6px;
  bottom: -9px;
  width: 9px;
  height: 8px;
  border: 1px solid #888;
  background: #fff;
}

.caret {
  display: inline-block;
  width: 2px;
  height: 28px;
  vertical-align: top;
  background: #000;
}

.scrollbar {
  width: 27px;
  display: flex;
  flex-direction: column;
  align-items: center;
  padding-top: 8px;
  background: #dfe2e8;
}

.split-bar {
  width: 16px;
  height: 3px;
  background: #6a6e76;
}

.scrollbar button {
  width: 100%;
  height: 26px;
  flex: none;
}

.scrollbar .line-up {
  border-top: 1px solid #c0c4cb;
}

.track {
  flex: 1;
  width: 25px;
}

.thumb {
  height: 75%;
  display: flex;
  align-items: center;
  justify-content: center;
  border: 1px solid #8b9099;
  border-radius: 2px;
  background: linear-gradient(90deg, #fafbfc, #dcdfe5);
}

.thumb i {
  width: 10px;
  height: 9px;
  background: repeating-linear-gradient(#8c9199 0 1px, transparent 1px 3px);
}

.scrollbar .browse {
  flex-direction: column;
}

.ring {
  width: 12px;
  height: 12px;
  border: 2px solid #777b82;
  border-radius: 50%;
}

/* status bar */

.statusbar {
  flex: none;
  height: 34px;
  display: flex;
  align-items: center;
  padding-right: 6px;
  background: linear-gradient(#eceef1, #d3d5d9 60%, #bdc0c6);
  border-top: 1px solid #f6f7f8;
  color: #444;
}

.status-item {
  height: 28px;
  padding: 0 15px;
  border-right: 1px solid #9da1a8;
}

.status-space {
  flex: 1;
}

.views {
  display: flex;
  height: 29px;
  padding-left: 7px;
  border-left: 1px solid #9da1a8;
}

.views button {
  width: 30px;
}

.views .on {
  border: 2px solid #d7a93b;
  border-radius: 4px;
  background: #fde28a;
}

.zoom-level {
  width: 68px;
}

.zoom-slider {
  appearance: none;
  width: 160px;
  height: 26px;
  margin: 0;
  background: linear-gradient(#8a8e95, #8a8e95) no-repeat center / 100% 2px;
}

.zoom-slider::-webkit-slider-thumb {
  appearance: none;
  width: 16px;
  height: 20px;
  background: #f5f6f7;
  border: 2px solid #757a82;
  border-radius: 2px 2px 8px 8px;
}

/* taskbar */

.taskbar {
  flex: none;
  height: 59px;
  display: flex;
  align-items: center;
  gap: 6px;
  padding-left: 2px;
  background: linear-gradient(#5a7090, #1a3157 3px, #14305f 50%, #112a55);
}

.start {
  width: 86px;
  height: 59px;
}

.task {
  width: 94px;
  height: 57px;
}

.task.open {
  border: 1px solid #8c9fbd;
  border-radius: 4px;
  background: linear-gradient(150deg, #8795ae, #3c5277 45%, #2c4268);
}

.task.current {
  background: linear-gradient(150deg, #dde2ea, #93a1ba 45%, #7e8fae);
}

.task-space {
  flex: 1;
}

.tray {
  display: flex;
  align-items: center;
  gap: 16px;
  height: 100%;
  padding-right: 2px;
  color: #fff;
}

.clock {
  width: 112px;
  padding-left: 10px;
  text-align: center;
  line-height: 25px;
}

.show-desktop {
  width: 34px;
  height: 57px;
  border: 1px solid #5d718f;
  background: linear-gradient(160deg, #4a5d7c, #1a2f52 60%);
}
```
